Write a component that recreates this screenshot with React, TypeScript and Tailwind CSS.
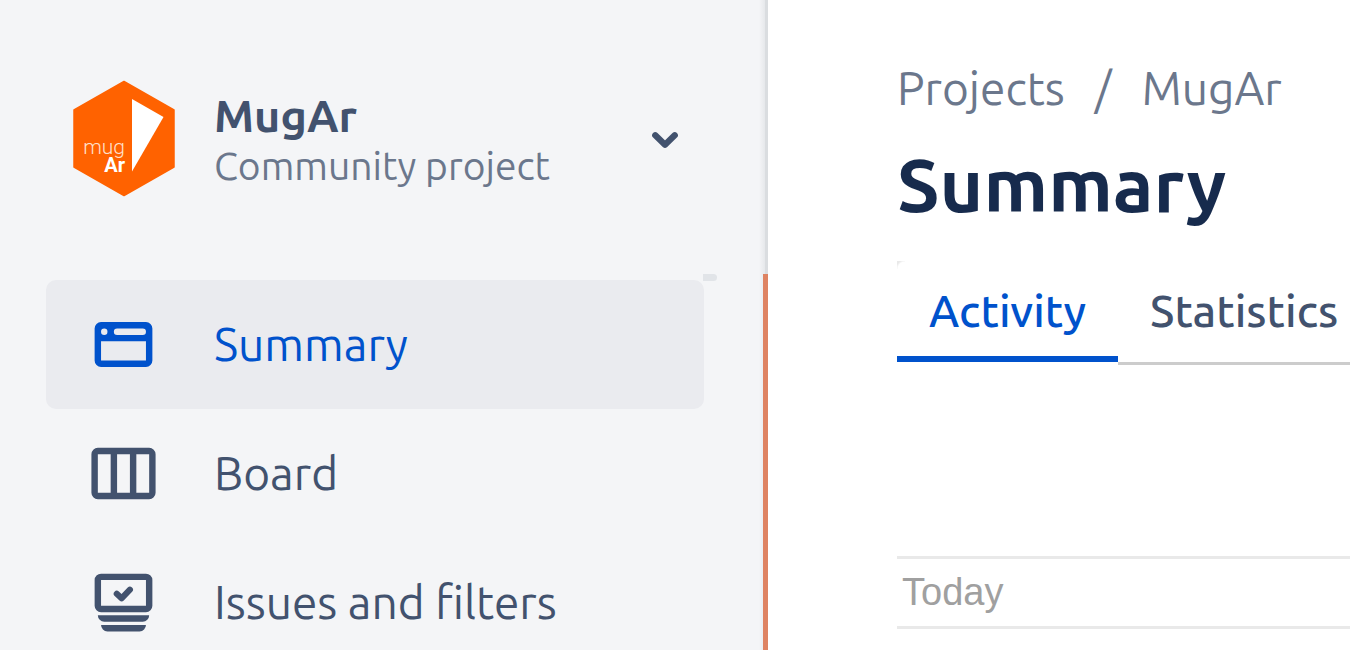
import { useState } from 'react'
import clsx from 'clsx'

function ProjectLogo() {
  return (
    <svg className="w-[102px] h-[117px] shrink-0" viewBox="0 0 102 117" role="img" aria-label="MugAr logo">
      <path d="M51 1.5 L101 30 V87 L51 115.500 L1 87 V30 Z" fill="#ff6200" stroke="#ff6200" strokeWidth="1.500" strokeLinejoin="round" />
      <path d="M59 19 L90.500 37 L59 91.500 Z" fill="#fff" />
      <text textAnchor="end" fontFamily="Roboto">
        <tspan x="52" y="74" fontSize="21" fontWeight="300" fill="#ffe0cc">mug</tspan>
        <tspan x="52" y="92" fontSize="20" fontWeight="700" fill="#fff">Ar</tspan>
      </text>
    </svg>
  )
}

function SummaryIcon() {
  return (
    <svg className="w-[77px] h-[77px] shrink-0" viewBox="0 0 24 24" aria-hidden="true">
      <path
        fill="currentColor"
        fillRule="evenodd"
        d="M5 5h14a2 2 0 0 1 2 2v10a2 2 0 0 1-2 2H5a2 2 0 0 1-2-2V7a2 2 0 0 1 2-2zM5 11v6h14v-6zM6 7a1 1 0 1 0 0 2a1 1 0 0 0 0-2zM10 7a1 1 0 0 0 0 2h8a1 1 0 0 0 0-2z"
      />
    </svg>
  )
}

function BoardIcon() {
  return (
    <svg className="w-[77px] h-[77px] shrink-0" viewBox="0 0 24 24" aria-hidden="true">
      <path
        fill="currentColor"
        fillRule="evenodd"
        d="M4 4h16a2 2 0 0 1 2 2v12a2 2 0 0 1-2 2H4a2 2 0 0 1-2-2V6a2 2 0 0 1 2-2zM4 6v12h4V6zM10 6v12h4V6zM16 6v12h4V6z"
      />
    </svg>
  )
}

function IssuesIcon() {
  return (
    <svg className="w-[77px] h-[77px] shrink-0" viewBox="0 0 24 24" aria-hidden="true">
      <path
        fill="currentColor"
        fillRule="evenodd"
        d="M5 3h14a2 2 0 0 1 2 2v8a2 2 0 0 1-2 2H5a2 2 0 0 1-2-2V5a2 2 0 0 1 2-2zM5 5v8h14V5z"
      />
      <path d="M9.900 9.300l1.500 1.400L14 8" fill="none" stroke="currentColor" strokeWidth="1.900" strokeLinecap="round" strokeLinejoin="round" />
      <path d="M4 16h16a2 2 0 0 1-2 2H6a2 2 0 0 1-2-2zM5 19h14a2 2 0 0 1-2 2H7a2 2 0 0 1-2-2z" fill="currentColor" />
    </svg>
  )
}

const NAV_ITEMS = [
  { label: 'Summary', Icon: SummaryIcon },
  { label: 'Board', Icon: BoardIcon },
  { label: 'Issues and filters', Icon: IssuesIcon },
]

const TABS = ['Activity', 'Statistics']

function Sidebar() {
  const [current, setCurrent] = useState('Summary')

  return (
    <aside className="relative bg-[#f4f5f7] border-r-3 border-[#dadde0] pt-20 pl-[46px] pr-[61px]">
      <div className="flex items-center gap-[39px] pl-[27px]">
        <ProjectLogo />
        <div className="flex-1 min-w-0 pt-1 leading-[50px] whitespace-nowrap">
          <div className="text-[45px] font-semibold text-[#42526e]">MugAr</div>
          <div className="text-[39px] text-[#6b778c]">Community project</div>
        </div>
        <button type="button" aria-label="Switch project" className="flex justify-center w-[78px] pt-0.5 text-[#42526e]">
          <svg className="w-[26px] h-[18px]" viewBox="0 0 26 18" aria-hidden="true">
            <path d="M3.300 4.300l9.700 9.400l9.700-9.400" fill="none" stroke="currentColor" strokeWidth="6.300" strokeLinecap="round" strokeLinejoin="round" />
          </svg>
        </button>
      </div>

      <nav className="mt-[83px]">
        {NAV_ITEMS.map(({ label, Icon }) => (
          <a
            key={label}
            href="#"
            onClick={() => setCurrent(label)}
            className={clsx(
              'flex items-center gap-[52px] h-[129px] pl-[39px] rounded-[10px] text-[46px] whitespace-nowrap',
              current === label ? 'bg-[#eaebef] text-[#0052cc]' : 'text-[#42526e]'
            )}
          >
            <Icon />
            {label}
          </a>
        ))}
      </nav>

      {/* soft edge, scroll hint and resize handle along the right side */}
      <div className="absolute top-0 bottom-0 right-0 w-[6px] bg-linear-to-r from-transparent to-[#e6e8eb]" />
      <div className="absolute top-[274px] right-12 w-[14px] h-[7px] rounded-r-full bg-[#e1e4e8]" />
      <div className="absolute top-[274px] bottom-0 -right-[3px] w-[5px] bg-[#de8362]" />
    </aside>
  )
}

function Tabs() {
  const [active, setActive] = useState('Activity')

  return (
    <div role="tablist" className="relative flex items-start mt-8">
      {TABS.map(tab => (
        <button
          key={tab}
          type="button"
          role="tab"
          aria-selected={active === tab}
          onClick={() => setActive(tab)}
          className={clsx(
            'px-8 pt-1 text-[45px] font-medium shrink-0',
            active === tab
              ? 'h-[101px] border-b-6 border-[#0052cc] text-[#0052cc]'
              : 'h-[104px] pb-1.5 border-b-3 border-[#ccc] text-[#42526e]'
          )}
        >
          {tab}
        </button>
      ))}
      <div className="flex-1 h-[104px] border-b-3 border-[#ccc]" />
      <div className="absolute top-0 left-0 w-2 h-2 bg-[radial-gradient(circle_at_100%_100%,transparent_7px,#e9e9e9_9px)]" />
    </div>
  )
}

export default function App() {
  return (
    <div className="grid grid-cols-[128fr_97fr] h-screen overflow-hidden bg-white font-['Ubuntu','Noto_Sans',sans-serif]">
      <Sidebar />
      <main className="min-w-0 overflow-hidden pt-[60px] pl-[129px]">
        <nav aria-label="Breadcrumb" className="flex items-center gap-[30px] text-[46px] leading-[56px] text-[#6b778c]">
          <a href="#">Projects</a>
          <span>/</span>
          <a href="#">MugAr</a>
        </nav>
        <h1 className="mt-[23px] text-[75px] leading-[90px] font-semibold text-[#172b4d]">Summary</h1>
        <Tabs />
        <h2 className="mt-[191px] pl-[5px] border-y-3 border-[#e9e9e9] font-['Liberation_Sans',sans-serif] text-[38px] leading-[67px] text-[#a0a0a0]">
          Today
        </h2>
      </main>
    </div>
  )
}
